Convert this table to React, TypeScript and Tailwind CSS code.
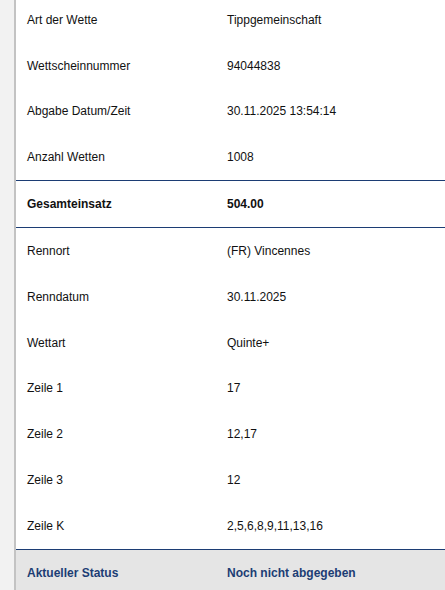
import React from "react";

const rowsA: [string, string][] = [
  ["Art der Wette", "Tippgemeinschaft"],
  ["Wettscheinnummer", "94044838"],
  ["Abgabe Datum/Zeit", "30.11.2025 13:54:14"],
  ["Anzahl Wetten", "1008"],
];

const rowsB: [string, string][] = [
  ["Rennort", "(FR) Vincennes"],
  ["Renndatum", "30.11.2025"],
  ["Wettart", "Quinte+"],
  ["Zeile 1", "17"],
  ["Zeile 2", "12,17"],
  ["Zeile 3", "12"],
  ["Zeile K", "2,5,6,8,9,11,13,16"],
];

function Row({ label, value, bold, h }: { label: string; value: string; bold?: boolean; h: string }) {
  return (
    <div className={`flex items-center pl-[11px] ${h} ${bold ? "font-bold" : ""}`}>
      <div className="w-[200px] shrink-0">{label}</div>
      <div>{value}</div>
    </div>
  );
}

export default function App() {
  return (
    <div
      className="flex w-[445px] h-[590px] overflow-hidden bg-[#f2f2f2] text-[12px] text-[#111]"
      style={{ fontFamily: '"Liberation Sans", Arial, sans-serif' }}
    >
      <div className="w-[14px] shrink-0" />
      <div className="w-[2px] shrink-0 bg-[#c3c3c3]" />
      <div className="flex-1 bg-white">
        <div className="-mt-[3px]">
          {rowsA.map(([l, v], i) => (
            <Row key={l} label={l} value={v} h={i === 0 ? "h-[45.75px]" : "h-[45.75px]"} />
          ))}
        </div>
        <div className="border-t border-b border-[#1c3d74]">
          <Row label="Gesamteinsatz" value="504.00" bold h="h-[46px]" />
        </div>
        {rowsB.map(([l, v]) => (
          <Row key={l} label={l} value={v} h="h-[45.85px]" />
        ))}
        <div className="border-t border-[#1c3d74] bg-[#e5e5e5] text-[#1c3d74]">
          <Row label="Aktueller Status" value="Noch nicht abgegeben" bold h="h-[47px]" />
        </div>
      </div>
    </div>
  );
}
